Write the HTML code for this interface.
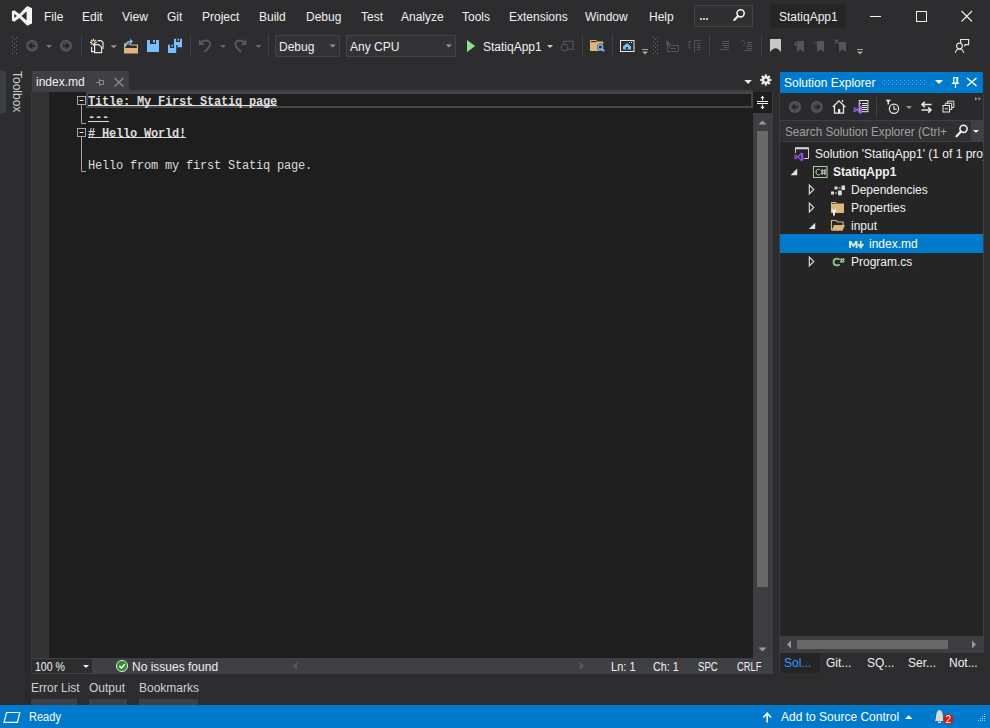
<!DOCTYPE html>
<html><head><meta charset="utf-8">
<style>
*{margin:0;padding:0;box-sizing:border-box}
html,body{width:990px;height:728px;overflow:hidden;background:#2d2d30;font-family:"Liberation Sans",sans-serif;color:#f1f1f1;font-size:12px}
.a{position:absolute}
.t{position:absolute;white-space:nowrap;line-height:1}
svg{position:absolute;overflow:visible}
.ed{position:absolute;left:88px;font-family:"Liberation Mono",monospace;font-size:12px;letter-spacing:-0.2px;color:#dcdcdc;white-space:pre;line-height:16px;height:16px}
.b{font-weight:bold}
.ul{position:absolute;height:1px;background:#dcdcdc}
.se{color:#f1f1f1}
</style></head><body>
<!-- MENU BAR -->
<div class="t" style="left:44px;top:11px">File</div>
<div class="t" style="left:82px;top:11px">Edit</div>
<div class="t" style="left:122px;top:11px">View</div>
<div class="t" style="left:167px;top:11px">Git</div>
<div class="t" style="left:202px;top:11px">Project</div>
<div class="t" style="left:259px;top:11px">Build</div>
<div class="t" style="left:306px;top:11px">Debug</div>
<div class="t" style="left:361px;top:11px">Test</div>
<div class="t" style="left:401px;top:11px">Analyze</div>
<div class="t" style="left:462px;top:11px">Tools</div>
<div class="t" style="left:509px;top:11px">Extensions</div>
<div class="t" style="left:585px;top:11px">Window</div>
<div class="t" style="left:649px;top:11px">Help</div>
<div class="a" style="left:694px;top:5px;width:59px;height:22px;background:#303033;border:1px solid #434346"></div>
<div class="a" style="left:700px;top:18px;width:2px;height:2px;background:#c8c8c8"></div><div class="a" style="left:703px;top:18px;width:2px;height:2px;background:#c8c8c8"></div><div class="a" style="left:706px;top:18px;width:2px;height:2px;background:#c8c8c8"></div>
<div class="a" style="left:771px;top:4px;width:74px;height:24px;background:#252526"></div>
<div class="t" style="left:779px;top:11px">StatiqApp1</div>

<!-- TOOLBAR -->
<div class="a" style="left:275px;top:35px;width:65px;height:22px;background:#333337;border:1px solid #434346"></div>
<div class="t" style="left:279px;top:41px">Debug</div>
<div class="a" style="left:346px;top:35px;width:110px;height:22px;background:#333337;border:1px solid #434346"></div>
<div class="t" style="left:350px;top:41px">Any CPU</div>
<div class="t" style="left:483px;top:41px">StatiqApp1</div>

<!-- TOOLBOX -->
<div class="a" style="left:0;top:71px;width:6px;height:42px;background:#3f3f46"></div>
<div class="t" style="left:23px;top:71px;transform:rotate(90deg);transform-origin:0 0;color:#d0d0d0">Toolbox</div>

<!-- DOC TAB -->
<div class="a" style="left:32px;top:71px;width:97px;height:21px;background:#3f3f46"></div>
<div class="t" style="left:36px;top:76px">index.md</div>
<div class="a" style="left:129px;top:90px;width:624px;height:2px;background:#3f3f46"></div>

<!-- EDITOR -->
<div class="a" style="left:32px;top:92px;width:721px;height:566px;background:#1e1e1e"></div>
<div class="a" style="left:32px;top:92px;width:17px;height:566px;background:#333333"></div>
<div class="a" style="left:86px;top:92px;width:667px;height:16px;border:2px solid #464646"></div>
<div class="ed b" style="top:94px">Title: My First Statiq page</div>
<div class="ul" style="left:88px;top:105px;width:189px"></div>
<div class="ed b" style="top:110px">---</div>
<div class="ul" style="left:88px;top:121px;width:21px"></div>
<div class="ed b" style="top:126px"># Hello World!</div>
<div class="ul" style="left:88px;top:137px;width:98px"></div>
<div class="ed" style="top:158px">Hello from my first Statiq page.</div>

<div class="a" style="left:25px;top:92px;width:6px;height:613px;background:#2a2a2d"></div>
<div class="a" style="left:31px;top:92px;width:1px;height:581px;background:#3a3a3e"></div>
<!-- scrollbar -->
<div class="a" style="left:753px;top:92px;width:20px;height:581px;background:#3e3e42"></div>
<div class="a" style="left:753px;top:92px;width:19px;height:21px;background:#1e1e1e"></div>
<div class="a" style="left:757px;top:131px;width:11px;height:456px;background:#686868"></div>

<!-- editor bottom strip -->
<div class="a" style="left:32px;top:658px;width:741px;height:16px;background:#3f3f46"></div>
<div class="a" style="left:32px;top:659px;width:60px;height:14px;background:#2d2d30"></div>
<div class="t" style="left:35px;top:661px;transform:scaleX(0.88);transform-origin:0 0">100 %</div>
<div class="t" style="left:132px;top:661px">No issues found</div>
<div class="t" style="left:611px;top:661px;transform:scaleX(0.92);transform-origin:0 0">Ln: 1</div>
<div class="t" style="left:653px;top:661px;transform:scaleX(0.9);transform-origin:0 0">Ch: 1</div>
<div class="t" style="left:698px;top:661px;transform:scaleX(0.8);transform-origin:0 0">SPC</div>
<div class="t" style="left:737px;top:661px;transform:scaleX(0.78);transform-origin:0 0">CRLF</div>

<!-- bottom tabs -->
<div class="t" style="left:31px;top:682px;color:#d0d0d0">Error List</div>
<div class="t" style="left:89px;top:682px;color:#d0d0d0">Output</div>
<div class="t" style="left:139px;top:682px;color:#d0d0d0">Bookmarks</div>
<div class="a" style="left:31px;top:699px;width:46px;height:6px;background:#3f3f46"></div>
<div class="a" style="left:89px;top:699px;width:38px;height:6px;background:#3f3f46"></div>
<div class="a" style="left:139px;top:699px;width:59px;height:6px;background:#3f3f46"></div>

<!-- SOLUTION EXPLORER -->
<div class="a" style="left:780px;top:72px;width:203px;height:21px;background:#007acc"></div>
<div class="t" style="left:784px;top:77px;color:#fff">Solution Explorer</div>
<div class="a" style="left:780px;top:93px;width:203px;height:27px;background:#2a2a2d"></div>
<div class="a" style="left:780px;top:120px;width:203px;height:22px;background:#303033;border-top:1px solid #3f3f46;border-bottom:1px solid #3f3f46"></div>
<div class="a" style="left:779px;top:93px;width:1px;height:580px;background:#3c3c40"></div>
<div class="a" style="left:983px;top:93px;width:1px;height:560px;background:#3f3f46"></div>
<div class="t" style="left:785px;top:126px;color:#a0a0a0;transform:scaleX(0.977);transform-origin:0 0">Search Solution Explorer (Ctrl+;)</div>
<div class="a" style="left:948px;top:121px;width:23px;height:20px;background:#303033"></div>
<div class="a" style="left:971px;top:121px;width:12px;height:20px;background:#3f3f46"></div>
<div class="a" style="left:780px;top:142px;width:203px;height:494px;background:#252526;overflow:hidden">
  <div class="a" style="left:0;top:91.5px;width:203px;height:19px;background:#007acc"></div>
  <div class="t" style="left:35px;top:6px">Solution 'StatiqApp1' (1 of 1 project)</div>
  <div class="t b" style="left:53px;top:24px">StatiqApp1</div>
  <div class="t" style="left:71px;top:42px">Dependencies</div>
  <div class="t" style="left:71px;top:60px">Properties</div>
  <div class="t" style="left:71px;top:78px">input</div>
  <div class="t" style="left:89px;top:96px;color:#fff">index.md</div>
  <div class="t" style="left:71px;top:114px">Program.cs</div>
</div>
<div class="a" style="left:780px;top:636px;width:203px;height:17px;background:#3e3e42"></div>
<div class="a" style="left:797px;top:640px;width:151px;height:9px;background:#686868"></div>
<div class="a" style="left:780px;top:653px;width:40px;height:20px;background:#252526"></div>
<div class="t" style="left:784px;top:657px;color:#3399ff">Sol...</div>
<div class="t" style="left:826px;top:657px">Git...</div>
<div class="t" style="left:867px;top:657px">SQ...</div>
<div class="t" style="left:908px;top:657px">Ser...</div>
<div class="t" style="left:949px;top:657px">Not...</div>

<!-- STATUS BAR -->
<div class="a" style="left:0;top:705px;width:990px;height:23px;background:#007acc"></div>
<div class="t" style="left:28.5px;top:711px;color:#fff;transform:scaleX(0.92);transform-origin:0 0">Ready</div>
<div class="t" style="left:781px;top:711px;color:#fff">Add to Source Control</div>

<svg width="990" height="728" style="left:0;top:0" viewBox="0 0 990 728">
<!-- VS logo -->
<path fill="#f5f5f5" fill-rule="evenodd" d="M11.9 11.2 L14.2 10.2 L19.4 13.9 L27.2 6 L32 8.2 L32 23.6 L27.2 25.8 L19.4 17.9 L14.2 21.7 L11.9 20.6 Z M14.3 13.7 L14.3 18.1 L16.9 15.9 Z M26.6 11.3 L26.6 20.5 L21.5 15.9 Z"/>
<!-- title search magnifier -->
<circle cx="740.6" cy="13.3" r="3.6" fill="none" stroke="#f1f1f1" stroke-width="1.6"/>
<path d="M738.2 16 L734.2 20" stroke="#f1f1f1" stroke-width="2" stroke-linecap="round"/>
<!-- window controls -->
<rect x="870" y="16" width="11" height="1" fill="#f1f1f1"/>
<rect x="916.5" y="11.5" width="10" height="10" fill="none" stroke="#f1f1f1" stroke-width="1"/>
<path d="M961.5 11 L972 21.5 M972 11 L961.5 21.5" stroke="#f1f1f1" stroke-width="1.1"/>

<!-- TOOLBAR -->
<g fill="#707070">
<rect x="12" y="37" width="1" height="1"/><rect x="16" y="37" width="1" height="1"/>
<rect x="14" y="39" width="1" height="1"/>
<rect x="12" y="41" width="1" height="1"/><rect x="16" y="41" width="1" height="1"/>
<rect x="14" y="43" width="1" height="1"/>
<rect x="12" y="45" width="1" height="1"/><rect x="16" y="45" width="1" height="1"/>
<rect x="14" y="47" width="1" height="1"/>
<rect x="12" y="49" width="1" height="1"/><rect x="16" y="49" width="1" height="1"/>
<rect x="14" y="51" width="1" height="1"/>
<rect x="12" y="53" width="1" height="1"/><rect x="16" y="53" width="1" height="1"/>
</g>
<g fill="#555558">
<circle cx="32" cy="45.8" r="6"/>
<circle cx="66" cy="45.8" r="6"/>
</g><g fill="#48484c"><circle cx="32" cy="45.8" r="4.2"/><circle cx="66" cy="45.8" r="4.2"/></g>
<g fill="none" stroke="#262628" stroke-width="1.7">
<path d="M34.8 45.8 H29.8 M31.8 43.6 L29.6 45.8 L31.8 48"/>
<path d="M63.2 45.8 H68.2 M66.2 43.6 L68.4 45.8 L66.2 48"/>
</g>
<path d="M46 45 H52 L49 48 Z" fill="#7a7a7a"/>
<rect x="81" y="35" width="1" height="21" fill="#3f3f46"/>
<!-- new project -->
<g stroke="#f5deb3" stroke-width="1.2" fill="none">
<path d="M93.4 38.8 V45.8 M89.9 42.3 H96.9 M91 39.9 L95.8 44.7 M95.8 39.9 L91 44.7"/>
</g>
<circle cx="93.4" cy="42.3" r="1.2" fill="#2d2d30"/>
<g fill="none" stroke="#e8e8e8" stroke-width="1.2">
<path d="M97.5 40.6 H101 L103 42.6 V49"/>
<path d="M91.6 47 V51.6 H94"/>
<path d="M94.6 44.6 H98.8 L101.6 47.4 V52.6 H94.6 Z"/>
</g>
<path d="M110.5 45.3 H117 L113.75 48.3 Z" fill="#999"/>
<!-- open folder -->
<path d="M124.6 44 H130 L131 45 H137.4 V53 H124.6 Z" fill="none" stroke="#dcb67a" stroke-width="1.2"/>
<path d="M124.6 48 H138 L136.8 53 H124.6 Z" fill="#dcb67a"/>
<path d="M125.6 46.5 C125.6 43 127.5 41.5 131 41.5" fill="none" stroke="#75beff" stroke-width="1.6"/>
<path d="M130 38.8 L133.2 41.5 L130 44.2 Z" fill="#75beff"/>
<!-- save -->
<path d="M147 40 H150 V44 H156 V40 H159 V52 H147 Z" fill="#75beff"/>
<rect x="153" y="40" width="2" height="2.5" fill="#75beff"/>
<!-- save all -->
<path d="M168 44.7 H170 V48 H174 V44.7 H176.2 V53 H168 Z" fill="#75beff"/>
<rect x="171.5" y="44.7" width="1.5" height="2" fill="#75beff"/>
<path d="M174 38.7 H176 V42 H180 V38.7 H182 V47.2 H177.5 V45 H174 Z" fill="#75beff"/>
<rect x="177.5" y="38.7" width="1.5" height="2" fill="#75beff"/>
<rect x="190" y="35" width="1" height="21" fill="#3f3f46"/>
<!-- undo/redo -->
<g fill="none" stroke="#5a5a5c" stroke-width="1.8">
<path d="M200.5 43 C204 39 211 40 210 45 C209.5 48 206 50 204.5 52"/>
<path d="M245 43 C241.5 39 234.5 40 235.5 45 C236 48 239.5 50 241 52"/>
</g>
<path d="M199 39 V45 H204.5 Z" fill="#5a5a5c"/>
<path d="M246.5 39 V45 H241 Z" fill="#5a5a5c"/>
<path d="M220 45 H226 L223 48 Z" fill="#6a6a6a"/>
<path d="M255.5 45 H261.5 L258.5 48 Z" fill="#6a6a6a"/>
<rect x="268" y="35" width="1" height="21" fill="#3f3f46"/>
<!-- combo arrows -->
<path d="M329.7 44.6 H335.7 L332.7 47.6 Z" fill="#999"/>
<path d="M445.8 44.6 H451.8 L448.8 47.6 Z" fill="#999"/>
<!-- play -->
<path d="M467 40 L475.2 46 L467 52 Z" fill="#8ae28a"/>
<path d="M547 45 H553 L550 48 Z" fill="#d0d0d0"/>
<!-- disabled attach -->
<g fill="none" stroke="#555558" stroke-width="1.1">
<rect x="563.5" y="41.3" width="9.5" height="8"/>
<circle cx="564.5" cy="47.5" r="3.3" fill="#2d2d30"/>
</g>
<rect x="582" y="35" width="1" height="21" fill="#3f3f46"/>
<!-- folder search -->
<path d="M590 40 H596 L597.5 41.5 H603.2 V51 H590 Z" fill="#dcb67a"/>
<rect x="591" y="41" width="5.5" height="1.2" fill="#2d2d30"/>
<circle cx="600.5" cy="47" r="3.6" fill="#2d2d30"/>
<circle cx="600.3" cy="47" r="2.3" fill="none" stroke="#75beff" stroke-width="1.4"/>
<path d="M601.8 48.6 L604.3 51.3" stroke="#75beff" stroke-width="1.6"/>
<rect x="612" y="35" width="1" height="21" fill="#3f3f46"/>
<!-- home window -->
<rect x="620.5" y="40.5" width="13.5" height="11" fill="none" stroke="#e8e8e8" stroke-width="1"/>
<rect x="629" y="42" width="1" height="1" fill="#e8e8e8"/><rect x="631" y="42" width="1" height="1" fill="#e8e8e8"/>
<path d="M623 46.5 L627 43 L631 46.5 V49.5 H623 Z" fill="#75beff"/>
<rect x="626" y="47" width="2" height="2.5" fill="#1e3a5a"/>
<rect x="642" y="49" width="6" height="1" fill="#aaa"/>
<path d="M642 51.5 H648 L645 54.5 Z" fill="#aaa"/>
<g fill="#707070">
<rect x="653" y="37" width="1" height="1"/><rect x="657" y="37" width="1" height="1"/>
<rect x="655" y="39" width="1" height="1"/>
<rect x="653" y="41" width="1" height="1"/><rect x="657" y="41" width="1" height="1"/>
<rect x="655" y="43" width="1" height="1"/>
<rect x="653" y="45" width="1" height="1"/><rect x="657" y="45" width="1" height="1"/>
<rect x="655" y="47" width="1" height="1"/>
<rect x="653" y="49" width="1" height="1"/><rect x="657" y="49" width="1" height="1"/>
<rect x="655" y="51" width="1" height="1"/>
<rect x="653" y="53" width="1" height="1"/><rect x="657" y="53" width="1" height="1"/>
</g>
<!-- disabled formatting icons -->
<g fill="none" stroke="#555558" stroke-width="1">
<path d="M667.5 45.5 V51.5 H678.5 V45.5 H671"/>
<path d="M670.5 48.5 H676"/>
<path d="M691.5 41.5 H689 V48 H691 M694.5 40.5 V52 M694.5 40.5 H700.5 M697 43.5 H700.5 M697 45.5 H700.5 M697 47.5 H700.5 M697 49.5 H700.5"/>
</g>
<path d="M666.3 40 L671.5 44.5 L669 44.5 L670.5 47 L669.3 47.5 L668 45 L666.3 46.5 Z" fill="#555558"/>
<rect x="709" y="35" width="1" height="21" fill="#3f3f46"/>
<g fill="none" stroke="#555558" stroke-width="1">
<path d="M722 41.5 H729 M722 43.5 H729 M722 45.5 H729 M724 47.5 H729 M720 49.5 H729"/>
<path d="M747 42.5 H752 M747 44.5 H752 M746 46.5 H752 M747 48.5 H752 M744 50.5 H752"/>
<path d="M741 41 C744 40 745.5 42 744.5 44 C744 45 742.5 45.5 742 45.5"/>
</g>
<rect x="761" y="35" width="1" height="21" fill="#3f3f46"/>
<!-- bookmarks -->
<path d="M770 39 H781 V52.2 C779.5 50 777.5 48.3 775.5 48.3 C773.5 48.3 771.5 50 770 52.2 Z" fill="#c8c8c8"/>
<g fill="#555558">
<path d="M797 41 H804 V52.2 L800.5 49.5 L797 52.2 Z"/>
<path d="M817 41 H824 V52.2 L820.5 49.5 L817 52.2 Z"/>
<path d="M839 42 H846 V52.2 L842.5 49.5 L839 52.2 Z"/>
</g>
<g fill="none" stroke="#555558" stroke-width="1.2">
<path d="M800 44 H794.5 M796.5 42 L794.5 44 L796.5 46"/>
<path d="M813 43 H819 M817 41 L819 43 L817 45"/>
<path d="M834.5 39.5 L838.5 43.5 M838.5 39.5 L834.5 43.5"/>
</g>
<rect x="857" y="49" width="6" height="1" fill="#aaa"/>
<path d="M857 51.5 H863 L860 54.5 Z" fill="#aaa"/>
<!-- feedback -->
<g fill="none" stroke="#e0e0e0" stroke-width="1.2">
<circle cx="959.5" cy="46" r="2.9"/>
<path d="M955.2 52.8 C956 50 957.5 49 959.5 49 C961.5 49 963 50 963.8 52.8"/>
<path d="M960.6 43.6 V39.5 H968.6 V44.6 H964.5"/>
</g>
<path d="M964.3 44.6 L966.5 44.6 L964.3 47 Z" fill="#e0e0e0"/>
</svg>

<svg width="990" height="728" style="left:0;top:0" viewBox="0 0 990 728">
<!-- tab pin & close -->
<g fill="none" stroke="#8a8a8a" stroke-width="1">
<path d="M96 82.5 H99.5 M99.5 78.8 V86 M99.5 80.5 H103.5 V84.5 H99.5"/>
<path d="M114.5 78 L123.5 86.5 M123.5 78 L114.5 86.5" stroke-width="1.3"/>
</g>
<!-- doc well dropdown + gear -->
<path d="M744.3 80 H751.9 L748.1 84 Z" fill="#e8e8e8"/>
<g transform="translate(765.8 80)">
<circle r="4" fill="#e8e8e8"/>
<g fill="#e8e8e8">
<rect x="-1.1" y="-5.6" width="2.2" height="11.2"/>
<rect x="-1.1" y="-5.6" width="2.2" height="11.2" transform="rotate(45)"/>
<rect x="-1.1" y="-5.6" width="2.2" height="11.2" transform="rotate(90)"/>
<rect x="-1.1" y="-5.6" width="2.2" height="11.2" transform="rotate(135)"/>
</g>
<circle r="1.6" fill="#2d2d30"/>
</g>
<!-- outlining margin -->
<g fill="none" stroke="#a5a5a5" stroke-width="1">
<rect x="77.5" y="96.5" width="8" height="8"/>
<rect x="77.5" y="128.5" width="8" height="8"/>
<path d="M81.5 105 V123.5 H86 M81.5 137 V171.5 H86"/>
</g>
<g fill="#e0e0e0">
<rect x="79.5" y="100" width="4" height="1"/>
<rect x="79.5" y="132" width="4" height="1"/>
</g>
<!-- split icon -->
<g fill="none" stroke="#f1f1f1" stroke-width="1">
<path d="M757 101.5 H768 M757 103.5 H768"/>
<path d="M762.5 96 V100.5 M762.5 104.5 V109"/>
</g>
<path d="M760.3 98.2 L762.5 95.8 L764.7 98.2 Z M760.3 106.8 L762.5 109.2 L764.7 106.8 Z" fill="#f1f1f1"/>
<!-- scrollbar arrows -->
<path d="M758.5 124.5 L762.5 120.5 L766.5 124.5 Z" fill="#999"/>
<path d="M758.5 647.5 L762.5 651.5 L766.5 647.5 Z" fill="#999"/>
<!-- zoom dropdown -->
<path d="M83 665 H89 L86 668 Z" fill="#f1f1f1"/>
<!-- check icon -->
<circle cx="122" cy="666" r="5.6" fill="#388a34" stroke="#c6efc6" stroke-width="1"/>
<path d="M119.3 666 L121.4 668.1 L124.8 664.3" fill="none" stroke="#fff" stroke-width="1.5"/>
<!-- h scroll arrows -->
<path d="M297 662 L293 666 L297 670 Z" fill="#5a5a5e"/>
<path d="M580 662 L584 666 L580 670 Z" fill="#5a5a5e"/>
<!-- status bar -->
<path d="M6.5 712.5 H19.8 L17.4 722.4 H4 Z" fill="none" stroke="#fff" stroke-width="1.2"/>
<path d="M767.2 722.5 V714 M763.3 717.5 L767.2 713.3 L771.1 717.5" fill="none" stroke="#fff" stroke-width="1.6"/>
<path d="M905 719 L908.7 715.2 L912.4 719 Z" fill="#fff"/>
<path d="M935 721 C936 719 936 717 936.3 714.5 C936.6 711.5 938 710 939.5 710 C941 710 942.4 711.5 942.7 714.5 C943 717 943 719 944 721 Z" fill="#d8d8d8"/>
<rect x="938" y="721.5" width="3" height="1.5" fill="#d8d8d8"/>
<circle cx="948.3" cy="719.3" r="5.3" fill="#d11919"/>
<text x="948.3" y="723.3" font-family="Liberation Sans" font-size="10" fill="#fff" text-anchor="middle">2</text>
<g fill="#9ecbef">
<rect x="984" y="714" width="1" height="1"/>
<rect x="982" y="716" width="1" height="1"/><rect x="984" y="716" width="1" height="1"/>
<rect x="980" y="718" width="1" height="1"/><rect x="982" y="718" width="1" height="1"/><rect x="984" y="718" width="1" height="1"/>
<rect x="978" y="720" width="1" height="1"/><rect x="980" y="720" width="1" height="1"/><rect x="982" y="720" width="1" height="1"/><rect x="984" y="720" width="1" height="1"/>
</g>

<!-- SE header icons -->
<defs><pattern id="grip" x="0" y="0" width="4" height="4" patternUnits="userSpaceOnUse">
<rect x="0" y="0" width="1" height="1" fill="#5aaae6"/><rect x="2" y="2" width="1" height="1" fill="#5aaae6"/></pattern></defs>
<rect x="882" y="80" width="46" height="5" fill="url(#grip)"/>
<path d="M935 80 H943 L939 84 Z" fill="#fff"/>
<g fill="none" stroke="#fff" stroke-width="1.2">
<path d="M953.8 77.6 H957.6 V83 H953.8 Z"/>
<path d="M951.8 83.4 H959 M955.5 83.4 V88"/>
<path d="M967 78 L976.5 86 M976.5 78 L967 86" stroke-width="1.5"/>
</g>
<rect x="956.3" y="77.6" width="1.4" height="5.4" fill="#fff"/>
<!-- SE toolbar -->
<g fill="#555558"><circle cx="795" cy="107" r="6"/><circle cx="816.8" cy="107" r="6"/></g><g fill="#48484c"><circle cx="795" cy="107" r="4.2"/><circle cx="816.8" cy="107" r="4.2"/></g>
<g fill="none" stroke="#262628" stroke-width="1.7">
<path d="M797.8 107 H792.8 M794.8 104.8 L792.6 107 L794.8 109.2"/>
<path d="M814 107 H819 M817 104.8 L819.2 107 L817 109.2"/>
</g>
<g fill="none" stroke="#e8e8e8" stroke-width="1.3">
<path d="M832.8 107 L839 100.8 L845.3 107 M834.5 105.5 V113.2 H843.5 V105.5"/>
<path d="M842.5 102 V100"/>
</g>
<rect x="838" y="109" width="2.2" height="4.2" fill="#e8e8e8"/>
<rect x="859.3" y="100.5" width="8.6" height="11.2" fill="#2d2d30" stroke="#e8e8e8" stroke-width="1"/>
<g fill="#e8e8e8"><rect x="862" y="103" width="5" height="1"/><rect x="862" y="105" width="5" height="1"/><rect x="862" y="107" width="5" height="1"/><rect x="862" y="109" width="5" height="1"/><rect x="860" y="103" width="1" height="1"/></g>
<path fill="#9a5ee6" fill-rule="evenodd" transform="translate(853.6 105.6) scale(0.42) translate(-11.9 -6)" d="M11.9 11.2 L14.2 10.2 L19.4 13.9 L27.2 6 L32 8.2 L32 23.6 L27.2 25.8 L19.4 17.9 L14.2 21.7 L11.9 20.6 Z M14.3 13.7 L14.3 18.1 L16.9 15.9 Z M26.6 11.3 L26.6 20.5 L21.5 15.9 Z"/>
<rect x="876" y="97" width="1" height="21" fill="#3f3f46"/>
<path d="M885.5 99.8 H891 L889 102 V104.5 L887.5 104.5 V102 Z" fill="#e8e8e8"/>
<circle cx="894" cy="108.8" r="4.6" fill="none" stroke="#e8e8e8" stroke-width="1.2"/>
<path d="M894 105.8 V109.3 H896.8" fill="none" stroke="#e8e8e8" stroke-width="1.1"/>
<path d="M906 106 H912 L909 109 Z" fill="#999"/>
<g fill="none" stroke="#e8e8e8" stroke-width="1.6">
<path d="M922 104.5 H931.5 M924.8 101.8 L922 104.5 L924.8 107.2"/>
<path d="M931 110 H921.5 M928.2 107.3 L931 110 L928.2 112.7"/>
</g>
<g fill="none" stroke="#e8e8e8" stroke-width="1">
<rect x="943" y="105.5" width="6.5" height="6.5" fill="#2d2d30"/>
<path d="M945.3 105.5 V103.3 H951.7 V109.5 H949.5 M947.5 103.3 V101.2 H953.8 V107.5 H951.7"/>
<path d="M944.8 108.8 H947.8"/>
</g>
<path d="M975 97 L977.5 98.8 L975 100.6 Z M978.5 97 L981 98.8 L978.5 100.6 Z" fill="#999"/>
<!-- search magnifier -->
<circle cx="963.5" cy="128.8" r="3.6" fill="none" stroke="#f1f1f1" stroke-width="1.6"/>
<path d="M961 131.5 L956.5 136.3" stroke="#f1f1f1" stroke-width="2.2" stroke-linecap="round"/>
<path d="M973 130 H979 L976 133 Z" fill="#f1f1f1"/>

<!-- SE TREE ICONS -->
<!-- solution -->
<g fill="none" stroke="#d0d0dc" stroke-width="1">
<path d="M795.5 153 V148 H808.5 V158.5 H804"/>
</g>
<rect x="795" y="147.3" width="14" height="2" fill="#d0d0dc"/>
<path fill="#8e50da" fill-rule="evenodd" transform="translate(794.5 152.6) scale(0.44) translate(-11.9 -6)" d="M11.9 11.2 L14.2 10.2 L19.4 13.9 L27.2 6 L32 8.2 L32 23.6 L27.2 25.8 L19.4 17.9 L14.2 21.7 L11.9 20.6 Z M14.3 13.7 L14.3 18.1 L16.9 15.9 Z M26.6 11.3 L26.6 20.5 L21.5 15.9 Z"/>
<!-- expanded triangles -->
<path d="M797.2 168.5 V175.2 H790.5 Z" fill="#e0e0e0"/>
<path d="M815.2 222.7 V229 H808.8 Z" fill="#e0e0e0"/>
<!-- collapsed triangles -->
<g fill="none" stroke="#e0e0e0" stroke-width="1.1">
<path d="M809.3 185 V194 L813.8 189.5 Z"/>
<path d="M809.3 203 V212 L813.8 207.5 Z"/>
<path d="M809.3 257 V266 L813.8 261.5 Z"/>
</g>
<!-- C# project -->
<rect x="813.5" y="166.5" width="13.5" height="11" fill="#1c261c" stroke="#a3c6a0" stroke-width="1.1"/>
<path d="M820.2 170.1 C819.8 169.6 819.2 169.3 818.4 169.3 C817 169.3 816 170.4 816 172.1 C816 173.8 817 174.9 818.4 174.9 C819.2 174.9 819.8 174.6 820.2 174.1" fill="none" stroke="#e0e0e0" stroke-width="1"/>
<path d="M822.3 169 L821.9 175 M825.1 169 L824.7 175 M820.9 170.9 H826.3 M820.8 173.2 H826.2" fill="none" stroke="#e0e0e0" stroke-width="0.9"/>
<!-- dependencies -->
<g fill="#dcdcdc">
<rect x="834.5" y="186.5" width="3" height="3"/><rect x="838.5" y="187.5" width="2" height="1"/><rect x="841.5" y="185.5" width="3.5" height="4.5"/>
<rect x="831" y="191.5" width="3" height="3"/><rect x="835" y="192.5" width="2" height="1"/><rect x="838" y="190.5" width="3.8" height="4.8"/>
</g>
<!-- properties folder -->
<path d="M831 202 H836 L837.5 203.5 H844 V213 H831 Z" fill="#dcb67a"/>
<rect x="832" y="203" width="4.5" height="1" fill="#2d2d30" opacity="0.7"/>
<path d="M832.5 208 C831 209 831 211 833 212 V215.5 H835 V212 C837 211 837 209 835.5 208 V210 H832.5 Z" fill="#f0f0f0"/>
<!-- open folder input -->
<path d="M831.5 230.3 V220.5 H836 L837.5 222 H843 V225" fill="none" stroke="#dcb67a" stroke-width="1.1"/>
<path d="M831.5 230.8 L834 225 H845 L842.5 230.8 Z" fill="#dcb67a"/>
<!-- md icon -->
<path d="M849 248 V241 H851.3 L853.3 244.5 L855.3 241 H857.6 V248 H855.6 V244.3 L853.3 247.5 L851 244.3 V248 Z" fill="#d8e6d8"/>
<path d="M860.8 240.8 V246 M858.2 243.9 L860.8 247.6 L863.4 243.9" fill="none" stroke="#d8e6d8" stroke-width="1.7"/>
<!-- program.cs -->
<path d="M839.6 259.8 C839 259 838.2 258.6 837.2 258.6 C835 258.6 833.6 260 833.6 262 C833.6 264 835 265.4 837.2 265.4 C838.2 265.4 839 265 839.6 264.3" fill="none" stroke="#8dc891" stroke-width="1.9"/>
<path d="M841.5 258 L841 263 M843.5 258 L843 263 M840.2 259.6 H844.6 M840 261.5 H844.4" fill="none" stroke="#8dc891" stroke-width="1.1"/>
<!-- SE h scrollbar arrows -->
<path d="M791 640.5 L787 644.5 L791 648.5 Z" fill="#999"/>
<path d="M972 640.5 L976 644.5 L972 648.5 Z" fill="#999"/>
</svg>
</body></html>
